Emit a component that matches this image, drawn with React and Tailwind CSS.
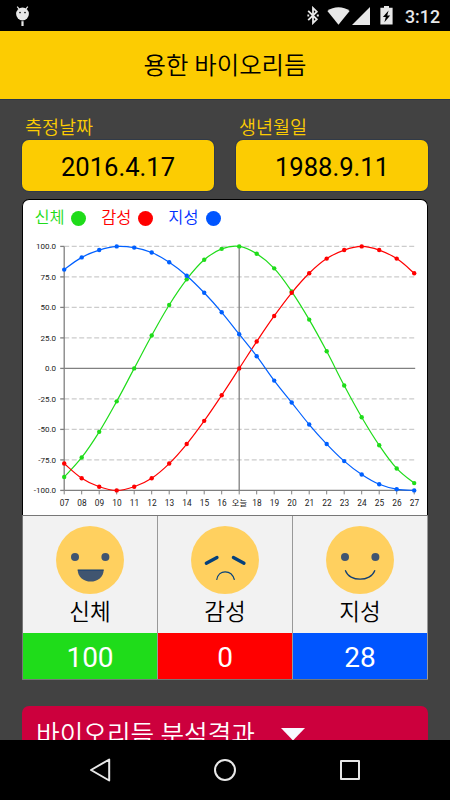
import React from "react";

const DAYS = [
  "07", "08", "09", "10", "11", "12", "13", "14", "15", "16", "오늘",
  "18", "19", "20", "21", "22", "23", "24", "25", "26", "27",
];

const Y_STEPS = [100, 75, 50, 25, 0, -25, -50, -75, -100];

// period in days, and the day of the cycle on the first date of the chart
const RHYTHMS = [
  { name: "신체", period: 23, start: -4, color: "#1fdc1a" },
  { name: "감성", period: 28, start: -10, color: "#ff0000" },
  { name: "지성", period: 33, start: 5, color: "#0060ff" },
];

const LEFT = 41.2;
const STEP = 17.5;
const ZERO = 128.4;
const RIGHT = LEFT + STEP * 20;

const toX = (i) => LEFT + STEP * i;
const toY = (value) => ZERO - value * 1.22;

function getPoints({ period, start }) {
  return DAYS.map((_, i) => {
    const value = Math.round(Math.sin((2 * Math.PI * (start + i)) / period) * 100);
    return { x: toX(i), y: toY(value) };
  });
}

function getPath(points) {
  const k = 0.2;
  let d = `M${points[0].x} ${points[0].y}`;
  for (let i = 1; i < points.length; i++) {
    const before = points[Math.max(i - 2, 0)];
    const prev = points[i - 1];
    const cur = points[i];
    const next = points[Math.min(i + 1, points.length - 1)];
    d += ` C${prev.x + (cur.x - before.x) * k} ${prev.y + (cur.y - before.y) * k}`;
    d += ` ${cur.x - (next.x - prev.x) * k} ${cur.y - (next.y - prev.y) * k}`;
    d += ` ${cur.x} ${cur.y}`;
  }
  return d;
}

function Chart() {
  return (
    <svg width="404" height="275" viewBox="0 0 404 275" className="block">
      {/* Grid and y axis */}
      {Y_STEPS.map((value) => (
        <g key={value}>
          {value !== 0 && value !== -100 && (
            <line x1={LEFT} x2={RIGHT + 1} y1={toY(value)} y2={toY(value)} stroke="#cccccc" strokeWidth="1.3" strokeDasharray="5 2.5" />
          )}
          <line x1={LEFT - 4} x2={LEFT} y1={toY(value)} y2={toY(value)} stroke="#808080" strokeWidth="1.3" />
          <text x="33" y={toY(value) + 3} textAnchor="end" fontSize="8" fill="#222222">
            {value.toFixed(1)}
          </text>
        </g>
      ))}
      <line x1={LEFT} x2={RIGHT + 1} y1={ZERO} y2={ZERO} stroke="#808080" strokeWidth="1.3" />
      <line x1={LEFT} x2={LEFT} y1={toY(100)} y2={toY(-100)} stroke="#808080" strokeWidth="1.3" />
      <line x1={toX(10)} x2={toX(10)} y1={toY(100)} y2={toY(-100)} stroke="#808080" strokeWidth="1.3" />
      <line x1={LEFT} x2={RIGHT + 1} y1={toY(-100)} y2={toY(-100)} stroke="#808080" strokeWidth="1.3" />

      {/* x axis */}
      {DAYS.map((day, i) => (
        <g key={day}>
          <line x1={toX(i)} x2={toX(i)} y1={toY(-100)} y2={toY(-100) + 4} stroke="#808080" strokeWidth="1" />
          <text x={toX(i) + 0.3} y="265.6" textAnchor="middle" fontSize="8.3" fill="#222222">
            {day}
          </text>
        </g>
      ))}

      {RHYTHMS.map((rhythm) => {
        const points = getPoints(rhythm);
        return (
          <g key={rhythm.name}>
            <path d={getPath(points)} fill="none" stroke={rhythm.color} strokeWidth="1.2" />
            {points.map((p) => (
              <circle key={p.x} cx={p.x} cy={p.y} r="2.2" fill={rhythm.color} />
            ))}
          </g>
        );
      })}
    </svg>
  );
}

function Face({ mood }) {
  return (
    <svg width="68" height="68" viewBox="0 0 68 68" className="block">
      <circle cx="34" cy="34" r="34" fill="#ffd05f" />
      {mood !== "sad" && (
        <>
          <circle cx="19" cy="31" r="4" fill="#405570" />
          <circle cx="49.4" cy="31" r="4" fill="#405570" />
        </>
      )}
      {mood === "happy" && (
        <path d="M21.7 43.7H47.7C47.7 51 41.5 55.6 34.7 55.6S21.7 51 21.7 43.7Z" fill="#405570" />
      )}
      {mood === "happy" && <path d="M21.7 44.1H47.7" stroke="#123f73" strokeWidth="0.9" />}
      {mood === "calm" && (
        <path d="M19.5 44.7C23.5 56 44.5 56 48.7 44.7" fill="none" stroke="#123f73" strokeWidth="1.3" strokeLinecap="round" />
      )}
      {mood === "sad" && (
        <g fill="none" stroke="#04407c" strokeLinecap="round">
          <path d="M15.3 37.3L26 31.5" strokeWidth="3.3" />
          <path d="M42.4 31.5L53 37.3" strokeWidth="3.3" />
          <path d="M25.8 53.5C27.5 43.2 40.5 43.2 43.3 53.5" strokeWidth="1.2" />
        </g>
      )}
    </svg>
  );
}

function StatusBar() {
  return (
    <div className="h-[31px] shrink-0 bg-black flex items-center justify-between pl-4 pr-2.5">
      <svg width="13" height="22" viewBox="0 0 13 22" className="mt-0.5">
        <path d="M1.2 0.6L3.4 3.4M11.8 0.6L9.6 3.4" stroke="#e8e8e8" strokeWidth="1.2" />
        <circle cx="6.5" cy="8" r="6.4" fill="#e8e8e8" />
        <circle cx="4" cy="6.6" r="0.8" fill="#000" />
        <circle cx="9" cy="6.6" r="0.8" fill="#000" />
        <path d="M6.5 15.2V20" stroke="#e8e8e8" strokeWidth="2.2" />
      </svg>
      <div className="flex items-center">
        <svg width="12" height="19" viewBox="0 0 12 19" fill="none" stroke="#e8e8e8" strokeWidth="1.8">
          <path d="M1.2 4.8L9.8 13.3L6 17V2L9.8 5.7L1.2 14.2" />
          <path d="M0.4 9.5h1.8M9.8 9.5h2" strokeWidth="2" />
        </svg>
        <svg width="23" height="18" viewBox="0 0 23 18" className="ml-[8.5px]">
          <path d="M0.4 4C6.5 -0.9 16.5 -0.9 22.6 4L11.5 17.7Z" fill="#e8e8e8" />
        </svg>
        <svg width="18" height="18" viewBox="0 0 18 18" className="ml-0.5">
          <path d="M18 0V18H0Z" fill="#e8e8e8" />
        </svg>
        <svg width="13" height="19" viewBox="0 0 13 19" className="ml-[9.5px]">
          <path d="M4 0H9V1.8H12.6V18.6H0.4V1.8H4Z" fill="#e8e8e8" />
          <path d="M8.6 4.6L2.9 11H5.8L4.4 16.2L10.2 9.4H7.2Z" fill="#000" />
        </svg>
        <span className="ml-3 text-[17.8px] leading-[18px] font-medium text-[#e8e8e8] mt-0.5">3:12</span>
      </div>
    </div>
  );
}

function DateField({ label, value }) {
  return (
    <div className="w-48">
      <p className="h-[23px] pl-[3px] text-[18.5px] leading-[23px] font-[350] text-[#fccc02]">{label}</p>
      <div className="h-[51px] rounded-[7px] bg-[#fccc02] ring-1 ring-[#26364c]/60 flex items-center justify-center text-[25.6px] text-black pt-1">
        {value}
      </div>
    </div>
  );
}

function Legend() {
  return (
    <div className="h-10 flex items-center pl-[11.5px] pb-1 font-[350]">
      <span className="text-[16.4px] text-[#1fdc1a]">신체</span>
      <span className="ml-[6.5px] mr-[15px] size-[15px] rounded-full bg-[#1fdc1a]" />
      <span className="text-[16.4px] text-[#ff0000]">감성</span>
      <span className="ml-[6.5px] mr-[15.5px] size-[15px] rounded-full bg-[#ff0000]" />
      <span className="text-[16.4px] text-[#0030ff]">지성</span>
      <span className="ml-[7px] size-[15px] rounded-full bg-[#0055ff]" />
    </div>
  );
}

function ScoreCard({ mood, name, score, className }) {
  return (
    <div className="flex-1 flex flex-col border-r border-[#999999]">
      <div className="h-[117px] bg-[#f2f2f2] flex flex-col items-center pt-[10px]">
        <Face mood={mood} />
        <p className="text-[22.5px] leading-[36px] font-[350] text-black">{name}</p>
      </div>
      <div className={`h-[46px] flex items-center justify-center pt-[3px] text-[28px] text-white ${className}`}>
        {score}
      </div>
    </div>
  );
}

function NavBar() {
  return (
    <div className="h-[60px] shrink-0 bg-black flex items-center justify-center gap-[101px]">
      <svg width="24" height="26" viewBox="0 0 24 26" fill="none" stroke="#e8e8e8" strokeWidth="2" strokeLinejoin="round">
        <path d="M21.2 2.5V23.5L3 13Z" />
      </svg>
      <svg width="24" height="24" viewBox="0 0 24 24" fill="none" stroke="#e8e8e8" strokeWidth="2">
        <circle cx="12" cy="12" r="10" />
      </svg>
      <svg width="24" height="24" viewBox="0 0 24 24" fill="none" stroke="#e8e8e8" strokeWidth="2" strokeLinejoin="round">
        <rect x="3" y="3" width="18" height="18" />
      </svg>
    </div>
  );
}

export default function App() {
  return (
    <div className="w-[450px] h-[800px] flex flex-col overflow-hidden bg-[#424242] font-['Roboto','Noto_Sans_CJK_KR',sans-serif]">
      <StatusBar />

      <header className="h-[69px] shrink-0 bg-[#fccc02] border-b border-[#26364c] flex items-center justify-center pt-[3px] text-[24.4px] font-[350] text-black">
        용한 바이오리듬
      </header>

      <main className="flex-1 min-h-0 overflow-hidden px-[22px] pt-[17px]">
        <div className="flex justify-between">
          <DateField label="측정날짜" value="2016.4.17" />
          <DateField label="생년월일" value="1988.9.11" />
        </div>

        <section className="mt-2 h-[316px] bg-white border border-b-0 border-black rounded-t-[7px]">
          <Legend />
          <Chart />
        </section>

        <section className="flex border-t border-l border-b border-[#777777]">
          <ScoreCard mood="happy" name="신체" score="100" className="bg-[#1fdc1a]" />
          <ScoreCard mood="sad" name="감성" score="0" className="bg-[#ff0000]" />
          <ScoreCard mood="calm" name="지성" score="28" className="bg-[#0055ff]" />
        </section>

        <section className="mt-[26px] h-20 rounded-[7px] bg-[#cc003d] flex items-start pl-[14px] pt-2.5 text-white">
          <h2 className="text-[25.7px] leading-[38px] font-[350] whitespace-nowrap">바이오리듬 분석결과</h2>
          <svg width="24" height="13" viewBox="0 0 24 13" className="ml-[26px] mt-3">
            <path d="M0 0H24L12 12.5Z" fill="#f8f8ff" />
          </svg>
        </section>
      </main>

      <NavBar />
    </div>
  );
}
